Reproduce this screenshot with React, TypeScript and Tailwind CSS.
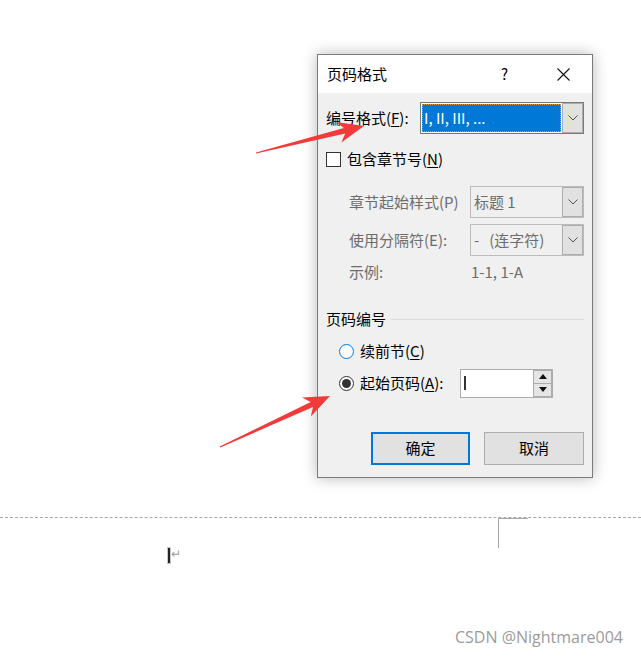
import React from "react";

type P = [number, number];

function arrowPoints(tail: P, tip: P): string {
  const dx = tip[0] - tail[0];
  const dy = tip[1] - tail[1];
  const len = Math.hypot(dx, dy);
  const ux = dx / len;
  const uy = dy / len;
  const nx = -uy;
  const ny = ux;
  const H = 25;
  const W = 10.5;
  const w = 2.8;
  const bx = tip[0] - ux * H;
  const by = tip[1] - uy * H;
  const pts: P[] = [
    [tail[0] + nx * 0.6, tail[1] + ny * 0.6],
    [bx + ux * 5 + nx * w, by + uy * 5 + ny * w],
    [bx - ux * 1 + nx * W, by - uy * 1 + ny * W],
    [tip[0], tip[1]],
    [bx - ux * 1 - nx * W, by - uy * 1 - ny * W],
    [bx + ux * 5 - nx * w, by + uy * 5 - ny * w],
    [tail[0] - nx * 0.6, tail[1] - ny * 0.6],
  ];
  return pts.map((p) => `${p[0].toFixed(1)},${p[1].toFixed(1)}`).join(" ");
}

const Chevron = () => (
  <svg width="10" height="6" viewBox="0 0 10 6">
    <path d="M0.5 0.5 L5 5 L9.5 0.5" fill="none" stroke="#505050" strokeWidth="1" />
  </svg>
);

const ArrowBtn = () => (
  <div className="flex h-full w-[21px] items-center justify-center border border-[#adadad] bg-[#e1e1e1]">
    <Chevron />
  </div>
);

const U = ({ c }: { c: string }) => <span className="underline underline-offset-2">{c}</span>;

export default function App() {
  const font = { fontFamily: '"Noto Sans CJK SC", "Noto Sans", sans-serif' };
  return (
    <div className="relative h-[658px] w-full overflow-hidden bg-white" style={font}>
      {/* document bits */}
      <div className="absolute left-0 top-[517px] w-full border-t border-dashed border-[#a8a8a8]" />
      <div className="absolute left-[498px] top-[518px] h-[30px] w-px bg-[#a6a6a6]" />
      <div className="absolute left-[498px] top-[518px] h-px w-[30px] bg-[#a6a6a6]" />
      <div className="absolute left-[167px] top-[547px] h-[17px] w-[4px] bg-[#c8c8c8]" />
      <div className="absolute left-[168px] top-[548px] h-[15px] w-[2px] bg-[#222]" />
      <div className="absolute left-[171px] top-[545px] text-[12px] leading-[16px] text-[#9a9a9a]">↵</div>

      {/* watermark */}
      <div
        className="absolute left-[455px] top-[626px] text-[16px] leading-[22px] text-[#9b9b9b]"
        style={{ fontFamily: '"Open Sans", sans-serif' }}
      >
        CSDN @Nightmare004
      </div>

      {/* dialog */}
      <div className="absolute left-[317px] top-[54px] flex h-[424px] w-[276px] flex-col border border-[#7a7a7a] bg-[#f0f0f0] shadow-[0_0_14px_rgba(0,0,0,0.28)]">
        <div className="flex h-[38px] items-center bg-white pl-[9px] pt-[-1px] text-[15px] text-black">
          <span>页码格式</span>
          <span className="ml-auto mr-[49px] text-[15px]">?</span>
          <svg width="13" height="13" viewBox="0 0 13 13" className="mr-[22px]">
            <path d="M0.5 0.5 L12.5 12.5 M12.5 0.5 L0.5 12.5" stroke="#111" strokeWidth="1.1" />
          </svg>
        </div>

        <div className="flex flex-1 flex-col pl-[8px] pr-[8px] pt-[9px] text-[15px] text-black">
          {/* row1 */}
          <div className="flex h-[32px] items-center justify-between">
            <span>
              编号格式(<U c="F" />):
            </span>
            <div className="flex h-[32px] w-[164px] items-stretch border border-[#7a7a7a] bg-white">
              <div className="m-[1px] flex flex-1 items-center bg-[#0078d7] pl-[2px] text-white outline-1 outline-dotted outline-[#d89a3a] -outline-offset-1">
                I, II, III, ...
              </div>
              <ArrowBtn />
            </div>
          </div>

          {/* checkbox */}
          <div className="mt-[15px] flex h-[20px] items-center">
            <div className="h-[15px] w-[15px] border border-[#333] bg-white" />
            <span className="ml-[6px]">
              包含章节号(<U c="N" />)
            </span>
          </div>

          {/* disabled rows */}
          <div className="mt-[17px] flex h-[32px] items-center pl-[23px] text-[#6d6d6d]">
            <span>章节起始样式(P)</span>
            <div className="ml-auto flex h-[32px] w-[114px] items-stretch border border-[#bcbcbc] bg-[#f0f0f0]">
              <div className="flex flex-1 items-center whitespace-pre pl-[3px]">标题 1</div>
              <ArrowBtn />
            </div>
          </div>
          <div className="mt-[6px] flex h-[32px] items-center pl-[23px] text-[#6d6d6d]">
            <span>使用分隔符(E):</span>
            <div className="ml-auto flex h-[32px] w-[114px] items-stretch border border-[#bcbcbc] bg-[#f0f0f0]">
              <div className="flex flex-1 items-center whitespace-pre pl-[3px]">
                -<span className="inline-block w-[10px]" />(连字符)
              </div>
              <ArrowBtn />
            </div>
          </div>
          <div className="mt-[6px] flex h-[20px] items-center pl-[23px] text-[#6d6d6d]">
            <span className="w-[122px]">示例:</span>
            <span>1-1, 1-A</span>
          </div>

          {/* section */}
          <div className="mt-[27px] flex h-[20px] items-center">
            <span>页码编号</span>
            <div className="ml-[5px] h-px flex-1 bg-[#dcdcdc]" />
          </div>

          <div className="mt-[12px] flex h-[20px] items-center pl-[13px]">
            <div className="h-[15px] w-[15px] rounded-full border border-[#0078d7] bg-white" />
            <span className="ml-[6px]">
              续前节(<U c="C" />)
            </span>
          </div>

          <div className="mt-[8px] flex h-[28px] items-center pl-[13px]">
            <div className="flex h-[15px] w-[15px] items-center justify-center rounded-full border border-[#333] bg-white">
              <div className="h-[9px] w-[9px] rounded-full bg-[#333]" />
            </div>
            <span className="ml-[6px]">
              起始页码(<U c="A" />):
            </span>
            <div className="ml-[17px] flex h-[29px] w-[93px] items-stretch border border-[#adadad] bg-white">
              <div className="flex flex-1 items-center pl-[3px]">
                <div className="h-[14px] w-[2px] bg-[#333]" />
              </div>
              <div className="flex w-[19px] flex-col">
                <div className="flex flex-1 items-center justify-center border border-[#adadad] bg-[#e5e5e5]">
                  <svg width="8" height="5" viewBox="0 0 8 5">
                    <path d="M0 5 L4 0 L8 5 Z" fill="#111" />
                  </svg>
                </div>
                <div className="flex flex-1 items-center justify-center border border-t-0 border-[#adadad] bg-[#e5e5e5]">
                  <svg width="8" height="5" viewBox="0 0 8 5">
                    <path d="M0 0 L4 5 L8 0 Z" fill="#111" />
                  </svg>
                </div>
              </div>
            </div>
          </div>

          <div className="mt-[35px] flex justify-end gap-[14px]">
            <div className="flex h-[33px] w-[99px] items-center justify-center border-2 border-[#0078d7] bg-[#e1e1e1]">
              确定
            </div>
            <div className="flex h-[33px] w-[100px] items-center justify-center border border-[#adadad] bg-[#e1e1e1]">
              取消
            </div>
          </div>
        </div>
      </div>

      {/* red arrows */}
      <svg className="pointer-events-none absolute left-0 top-0" width="641" height="658">
        <polygon points={arrowPoints([256, 153], [364, 126])} fill="#f23a3a" />
        <polygon points={arrowPoints([220, 447], [330, 396])} fill="#f23a3a" />
      </svg>
    </div>
  );
}
